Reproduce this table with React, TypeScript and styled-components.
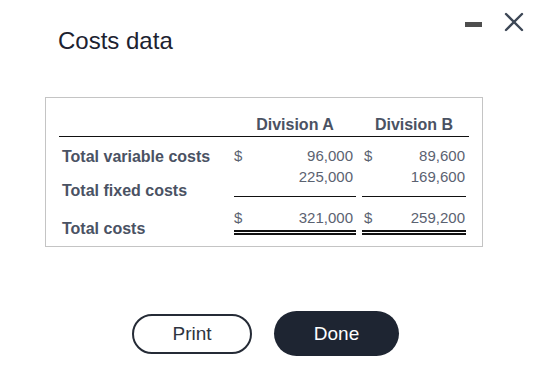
import styled, { createGlobalStyle } from 'styled-components'

const GlobalStyle = createGlobalStyle`
  html, body {
    margin: 0;
    padding: 0;
    background: #ffffff;
  }
  body {
    font-family: "Liberation Sans", Arial, sans-serif;
  }
`

type CostRow = {
  label: string
  a: string
  b: string
  showDollar: boolean
  rule: 'none' | 'single' | 'double'
  padTop: number
  padBottom: number
  // how far the label sits below the bottom of its row
  drop: number
}

const rows: CostRow[] = [
  { label: 'Total variable costs', a: '96,000', b: '89,600', showDollar: true, rule: 'none', padTop: 10, padBottom: 3, drop: -2.5 },
  { label: 'Total fixed costs', a: '225,000', b: '169,600', showDollar: false, rule: 'single', padTop: 0, padBottom: 10, drop: 3 },
  { label: 'Total costs', a: '321,000', b: '259,200', showDollar: true, rule: 'double', padTop: 12, padBottom: 3, drop: 2.5 },
]

function CloseIcon() {
  return (
    <svg width="20" height="20" viewBox="0 0 20 20" fill="none">
      <path d="M2 2L18 18M18 2L2 18" stroke="#3d4756" strokeWidth="2.4" strokeLinecap="round" />
    </svg>
  )
}

export default function App() {
  return (
    <>
      <GlobalStyle />
      <Dialog>
        <Header>
          <Title>Costs data</Title>
          <WindowControls>
            <MinimizeBar />
            <CloseIcon />
          </WindowControls>
        </Header>

        <TableBox>
          <CostGrid>
            <HeadCell />
            <HeadCell>Division A</HeadCell>
            <HeadCell>Division B</HeadCell>

            {rows.map((row) => (
              <Row key={row.label} row={row} />
            ))}
          </CostGrid>
        </TableBox>

        <Actions>
          <PrintButton>Print</PrintButton>
          <DoneButton>Done</DoneButton>
        </Actions>
      </Dialog>
    </>
  )
}

function Row({ row }: { row: CostRow }) {
  return (
    <>
      <RowLabel $drop={row.drop}>{row.label}</RowLabel>
      <AmountCell $rule={row.rule} $padTop={row.padTop} $padBottom={row.padBottom} $padLeft={0} $padRight={3}>
        <Dollar>{row.showDollar ? '$' : ''}</Dollar>
        <Amount>{row.a}</Amount>
      </AmountCell>
      <AmountCell $rule={row.rule} $padTop={row.padTop} $padBottom={row.padBottom} $padLeft={2} $padRight={1}>
        <Dollar>{row.showDollar ? '$' : ''}</Dollar>
        <Amount>{row.b}</Amount>
      </AmountCell>
    </>
  )
}

const Dialog = styled.div`
  width: 536px;
  height: 367px;
  display: flex;
  flex-direction: column;
  background: #ffffff;
  overflow: hidden;
`

const Header = styled.header`
  display: flex;
  justify-content: space-between;
  align-items: flex-start;
  padding: 12px 12px 0 58px;
`

const Title = styled.h1`
  margin: 15px 0 0;
  font-size: 24px;
  line-height: 28px;
  font-weight: 400;
  color: #1c2230;
`

const WindowControls = styled.div`
  display: flex;
  align-items: center;
  gap: 22px;
  height: 20px;

  svg {
    display: block;
  }
`

const MinimizeBar = styled.div`
  width: 17px;
  height: 5px;
  margin-top: 4px;
  background: #4e4e4e;
`

const TableBox = styled.section`
  box-sizing: border-box;
  width: 438px;
  margin: 42px 0 0 45px;
  padding: 18px 12px 11px 13px;
  border: 1px solid #c4c4c4;
`

const CostGrid = styled.div`
  display: grid;
  grid-template-columns: 172px 128px 110px;
  color: #4a5263;
`

const HeadCell = styled.div`
  font-size: 16px;
  line-height: 18px;
  font-weight: 700;
  text-align: center;
  padding-bottom: 2px;
  border-bottom: 1px solid #111111;
`

const RowLabel = styled.div<{ $drop: number }>`
  align-self: end;
  margin-bottom: ${(p) => -p.$drop}px;
  padding-left: 3px;
  font-size: 16px;
  line-height: 18px;
  font-weight: 700;
  white-space: nowrap;
`

const AmountCell = styled.div<{
  $rule: 'none' | 'single' | 'double'
  $padTop: number
  $padBottom: number
  $padLeft: number
  $padRight: number
}>`
  display: flex;
  justify-content: space-between;
  margin: 0 3px;
  padding: ${(p) => `${p.$padTop}px ${p.$padRight}px ${p.$padBottom}px ${p.$padLeft}px`};
  font-size: 15px;
  line-height: 18px;
  color: #5b6271;
  border-bottom: ${(p) =>
    p.$rule === 'single' ? '1px solid #111111' : p.$rule === 'double' ? '5px double #111111' : 'none'};
`

const Dollar = styled.span`
  min-width: 8px;
`

const Amount = styled.span`
  text-align: right;
`

const Actions = styled.div`
  display: flex;
  justify-content: center;
  align-items: center;
  gap: 22px;
  margin-top: 64px;
  padding-right: 5px;
`

const PillButton = styled.button`
  box-sizing: border-box;
  border-radius: 999px;
  font-family: "Liberation Sans", Arial, sans-serif;
  font-size: 19px;
  cursor: pointer;
`

const PrintButton = styled(PillButton)`
  width: 120px;
  height: 40px;
  background: #ffffff;
  color: #2e3440;
  border: 2px solid #252b36;
`

const DoneButton = styled(PillButton)`
  width: 125px;
  height: 45px;
  background: #1e2532;
  color: #ffffff;
  border: none;
`
